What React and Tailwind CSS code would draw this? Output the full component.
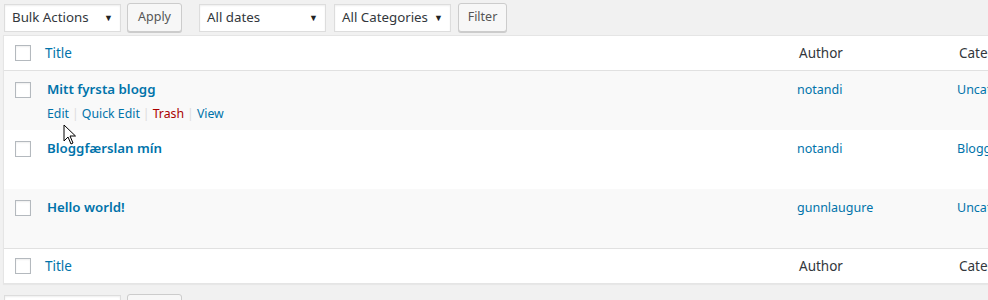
import React from 'react';

const font = { fontFamily: '"Noto Sans", "Liberation Sans", sans-serif' };

function Checkbox() {
  return <div className="h-4 w-4 border border-[#b4b9be] bg-white shadow-[inset_0_1px_2px_rgba(0,0,0,0.07)]" />;
}

function Select({ label, width }) {
  return (
    <div
      className={`flex h-7 items-center justify-between whitespace-nowrap border border-[#ddd] bg-white pl-[7px] pr-[7px] text-[13.3px] text-[#32373c] shadow-[inset_0_1px_2px_rgba(0,0,0,0.07)] ${width}`}
    >
      <span>{label}</span>
      <span className="text-[9px] text-[#222]">▼</span>
    </div>
  );
}

function Button({ label, width }) {
  return (
    <div
      className={`flex h-[29px] items-center justify-center rounded-[3px] border border-[#ccc] bg-[#f7f7f7] text-[12.5px] text-[#555] shadow-[0_1px_0_#ccc] ${width}`}
    >
      {label}
    </div>
  );
}

const posts = [
  { title: 'Mitt fyrsta blogg', author: 'notandi', cat: 'Uncategorized', actions: true, bg: 'bg-[#f9f9f9]' },
  { title: 'Bloggfærslan mín', author: 'notandi', cat: 'Blogg', bg: 'bg-white' },
  { title: 'Hello world!', author: 'gunnlaugure', cat: 'Uncategorized', bg: 'bg-[#f9f9f9]' },
];

function HeadRow({ border }) {
  return (
    <div className={`grid h-[35px] grid-cols-[41px_752px_160px_1fr] items-center bg-white ${border}`}>
      <div className="pl-[11px]">
        <Checkbox />
      </div>
      <div className="pt-[1px] text-[13.5px] text-[#0073aa]">Title</div>
      <div className="pt-[1px] pl-[2px] text-[13.5px] text-[#32373c]">Author</div>
      <div className="whitespace-nowrap pt-[1px] pl-[2px] text-[13.5px] text-[#32373c]">Categories</div>
    </div>
  );
}

export default function App() {
  return (
    <div className="relative h-[300px] w-[988px] overflow-hidden bg-[#f1f1f1]" style={font}>
      <div className="flex items-center pl-1 pt-[3px]">
        <Select label="Bulk Actions" width="w-[117px]" />
        <div className="ml-[6px]">
          <Button label="Apply" width="w-[55px]" />
        </div>
        <div className="ml-[17px]">
          <Select label="All dates" width="w-[127px]" />
        </div>
        <div className="ml-2">
          <Select label="All Categories" width="w-[117px]" />
        </div>
        <div className="ml-[7px]">
          <Button label="Filter" width="w-[49px]" />
        </div>
      </div>

      <div className="ml-[3px] mt-[3px] w-[1000px] border border-[#e5e5e5] bg-white shadow-[0_1px_1px_rgba(0,0,0,0.04)]">
        <HeadRow border="border-b border-[#e1e1e1]" />
        {posts.map((p) => (
          <div key={p.title} className={`grid h-[59px] grid-cols-[43px_750px_160px_1fr] ${p.bg}`}>
            <div className="pl-[11px] pt-[11px]">
              <Checkbox />
            </div>
            <div className="pt-[9px]">
              <div className="text-[13.3px] font-semibold text-[#0073aa]">{p.title}</div>
              {p.actions && (
                <div className="mt-[5px] flex text-[12.3px] text-[#0073aa]">
                  <span>Edit</span>
                  <span className="px-[3px] text-[#ddd]">|</span>
                  <span>Quick Edit</span>
                  <span className="px-[3px] text-[#ddd]">|</span>
                  <span className="text-[#a00]">Trash</span>
                  <span className="px-[3px] text-[#ddd]">|</span>
                  <span>View</span>
                </div>
              )}
            </div>
            <div className="pt-[10px] text-[12.5px] text-[#0073aa]">{p.author}</div>
            <div className="whitespace-nowrap pt-[10px] text-[12.5px] text-[#0073aa]">{p.cat}</div>
          </div>
        ))}
        <HeadRow border="border-t border-[#e1e1e1]" />
      </div>

      <div className="mt-[10px] flex items-center pl-1">
        <Select label="Bulk Actions" width="w-[117px]" />
        <div className="ml-[6px]">
          <Button label="Apply" width="w-[55px]" />
        </div>
      </div>

      <svg className="absolute left-[63px] top-[124px]" width="14" height="22" viewBox="0 0 14 22">
        <path d="M1 1 L1 17 L5 13 L8 20 L10 19 L7 12 L12.5 12 Z" fill="white" stroke="black" strokeWidth="1" strokeLinejoin="round" />
      </svg>
    </div>
  );
}
